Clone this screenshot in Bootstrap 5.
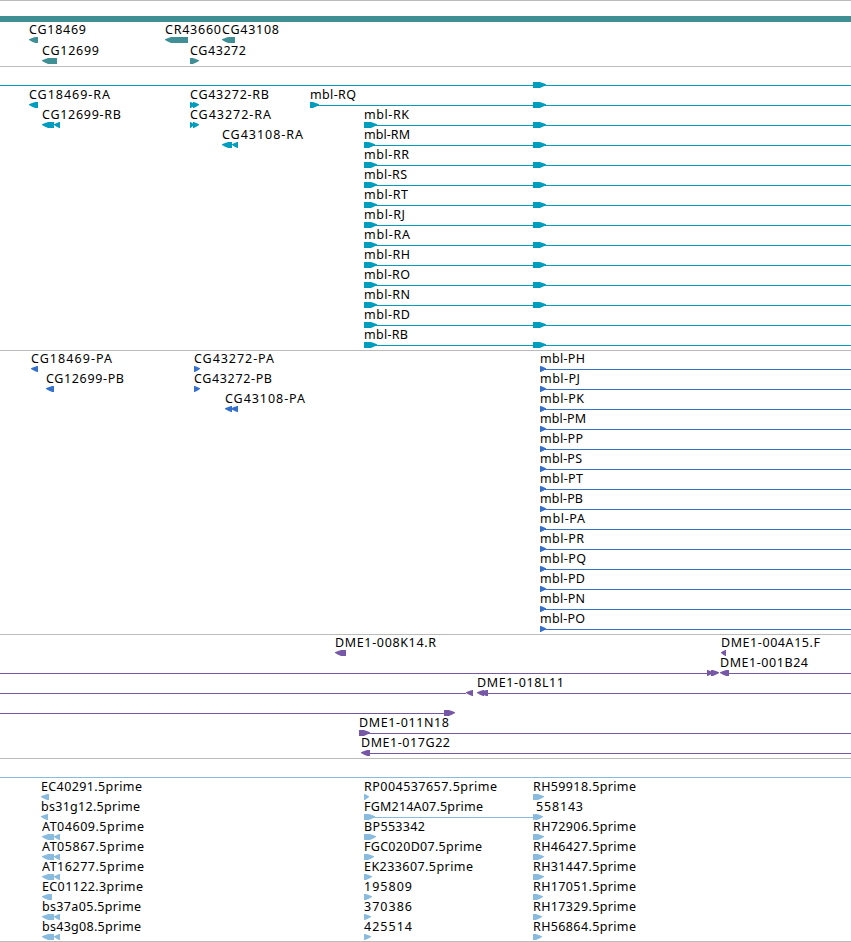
<!DOCTYPE html>
<html lang="en">
<head>
<meta charset="utf-8">
<meta name="viewport" content="width=device-width, initial-scale=1">
<title>Genome browser</title>
<link href="https://cdn.jsdelivr.net/npm/bootstrap@5.3.0/dist/css/bootstrap.min.css" rel="stylesheet">
<style>
  body { font-family: "Noto Sans", sans-serif; background: #fff; color: #000; width: 851px; height: 942px; }
  .track { border-top: 1px solid #bbb; padding-top: 3px; }
  .track-end { height: 1px; background: #bbb; }
  .lane { height: 20px; }
  .lane text { font-size: 12.5px; fill: #000; }
  .lane path, .lane rect { fill: currentColor; }
  .chrom { height: 6px; margin: 12px 0 3px; background: #3f8f94; }
  .genes { color: #3f8f94; height: 66px; }
  .genes .lane { height: 21px; }
  .rna { color: #009dbe; }
  .cds { color: #3570cc; }
  .bac { color: #7658a6; }
  .est { color: #88bbdd; }
  /* The closing rule shares its row with the last lane. */
  .est .lane:last-child { height: 19px; }
</style>
<script src="https://cdn.jsdelivr.net/npm/bootstrap@5.3.0/dist/js/bootstrap.bundle.min.js"></script>
</head>
<body class="m-0 overflow-hidden">
<main class="d-flex flex-column">
  <section class="track genes d-flex flex-column" id="genes"><div class="chrom flex-shrink-0"></div></section>
  <section class="track rna d-flex flex-column" id="rna"></section>
  <section class="track cds d-flex flex-column" id="cds"></section>
  <section class="track bac d-flex flex-column" id="bac"></section>
  <section class="track est d-flex flex-column" id="est"></section>
  <div class="track-end"></div>
</main>
<script>
  // Feature glyphs: L/R = [direction, start, end]; "-" = thin intron line [ "-", start, end ].
  // Labels: [text, x, width].
  const E = 851;
  const glyph = ([d, a, b]) => {
    if (d === "-") return `<rect x="${a}" y="15" width="${b - a}" height="1"/>`;
    const w = b - a, h = Math.min(7, w), s = h * .88, m = h * .45;
    return d === "L"
      ? `<path d="M${b} 12V18H${a + s}L${a + m} 16.8L${a} 15.1V14.2L${a + m} 13L${a + s} 12Z"/>`
      : `<path d="M${a} 12V18H${b - s}L${b - m} 16.8L${b} 15.1V14.2L${b - m} 13L${b - s} 12Z"/>`;
  };
  const lane = (labels, glyphs) =>
    `<svg class="lane d-block w-100 flex-shrink-0" overflow="visible">${glyphs.map(glyph).join("")}${labels.map(([t, x, w]) =>
      `<text x="${x}" y="9" textLength="${w}" lengthAdjust="spacing">${t}</text>`).join("")}</svg>`;
  const fill = (id, lanes) => document.getElementById(id).insertAdjacentHTML("beforeend", lanes.map(l => lane(...l)).join(""));

  fill("genes", [
    [[["CG18469", 29, 57], ["CR43660", 165, 56], ["CG43108", 222, 57]], [["L", 29, 38], ["L", 165, 188], ["L", 222, 235]]],
    [[["CG12699", 42, 57], ["CG43272", 190, 56]], [["L", 42, 57], ["R", 190, 199]]]
  ]);
  const far = ["R", 533, 546];
  fill("rna", [
    [[], [["-", 0, E], far]],
    [[["CG18469-RA", 29, 81], ["CG43272-RB", 190, 79], ["mbl-RQ", 310, 46]], [["L", 29, 38], ["R", 190, 195], ["R", 193, 199], ["R", 310, 319], ["-", 310, E], far]],
    [[["CG12699-RB", 42, 79], ["CG43272-RA", 190, 81], ["mbl-RK", 364, 45]], [["L", 42, 54], ["L", 54, 60], ["R", 190, 194], ["R", 193, 199], ["R", 364, 377], ["-", 364, E], far]],
    [[["CG43108-RA", 222, 81], ["mbl-RM", 364, 46]], [["L", 222, 232], ["L", 232, 238], ["R", 364, 375], ["-", 364, E], far]],
    ...[["RR", 45], ["RS", 43], ["RT", 44], ["RJ", 41], ["RA", 46], ["RH", 46], ["RO", 46], ["RN", 46], ["RD", 46], ["RB", 44]].map(([n, w]) =>
      [[["mbl-" + n, 364, w]], [["R", 364, 377], ["-", 364, E], far]])
  ]);
  const left = [
    [[["CG18469-PA", 31, 81], ["CG43272-PA", 194, 80]], [["L", 31, 38], ["R", 194, 200]]],
    [[["CG12699-PB", 46, 78], ["CG43272-PB", 194, 78]], [["L", 46, 54], ["R", 194, 200]]],
    [[["CG43108-PA", 225, 80]], [["L", 225, 232], ["L", 231, 238]]]
  ];
  fill("cds", [["PH", 45], ["PJ", 40], ["PK", 44], ["PM", 46], ["PP", 43], ["PS", 42], ["PT", 43], ["PB", 43], ["PA", 45], ["PR", 44], ["PQ", 46], ["PD", 45], ["PN", 45], ["PO", 45]].map(([n, w], i) => {
    const [t, g] = left[i] || [[], []];
    return [[...t, ["mbl-" + n, 540, w]], [...g, ["R", 540, 546], ["-", 540, E]]];
  }));
  fill("bac", [
    [[["DME1-008K14.R", 335, 101], ["DME1-004A15.F", 721, 99]], [["L", 335, 346], ["L", 721, 726]]],
    [[["DME1-001B24", 720, 88]], [["-", 0, 718], ["R", 707, 713], ["R", 711, 719], ["L", 720, 729], ["-", 728, E]]],
    [[["DME1-018L11", 477, 87]], [["-", 0, 466], ["L", 466, 473], ["L", 477, 484], ["L", 480, 488], ["-", 488, E]]],
    [[], [["-", 0, 445], ["R", 444, 455]]],
    [[["DME1-011N18", 359, 90]], [["R", 359, 370], ["-", 360, E]]],
    [[["DME1-017G22", 361, 89]], [["L", 361, 370], ["-", 368, E]]]
  ]);
  const tail = [["L", 42, 54], ["L", 54, 60]];
  fill("est", [
    [[], [["-", 0, E]]],
    [[["EC40291.5prime", 41, 101], ["RP004537657.5prime", 364, 133], ["RH59918.5prime", 533, 103]], [["L", 41, 49], ["R", 364, 369], ["R", 533, 544]]],
    [[["bs31g12.5prime", 41, 99], ["FGM214A07.5prime", 364, 119], ["558143", 536, 47]], [["L", 41, 48], ["R", 364, 375], ["-", 364, 535], ["R", 533, 538], ["R", 535, 543]]],
    [[["AT04609.5prime", 42, 102], ["BP553342", 364, 61], ["RH72906.5prime", 533, 103]], [...tail, ["R", 364, 376], ["R", 533, 544]]],
    [[["AT05867.5prime", 42, 102], ["FGC020D07.5prime", 364, 118], ["RH46427.5prime", 533, 103]], [...tail, ["R", 364, 374], ["R", 533, 544]]],
    [[["AT16277.5prime", 42, 102], ["EK233607.5prime", 364, 109], ["RH31447.5prime", 533, 103]], [...tail, ["R", 364, 372], ["R", 533, 544]]],
    [[["EC01122.3prime", 42, 101], ["195809", 364, 48], ["RH17051.5prime", 533, 103]], [["L", 42, 52], ["R", 364, 372], ["R", 533, 543]]],
    [[["bs37a05.5prime", 42, 99], ["370386", 364, 48], ["RH17329.5prime", 533, 103]], [...tail, ["R", 364, 371], ["R", 533, 542]]],
    [[["bs43g08.5prime", 42, 99], ["425514", 364, 48], ["RH56864.5prime", 533, 103]], [...tail, ["R", 364, 371], ["R", 533, 542]]]
  ]);
</script>
</body>
</html>
